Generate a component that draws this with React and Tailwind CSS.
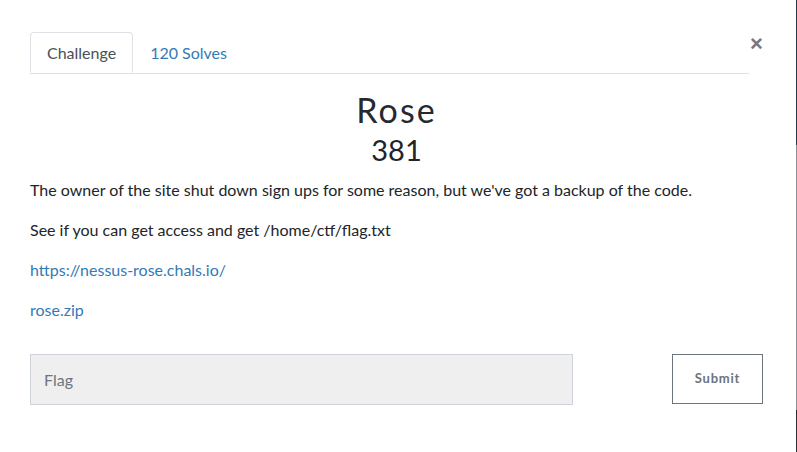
import React, { useState } from 'react';

const App = () => {
    const [flag, setFlag] = useState("")

    return (
        <div className="flex w-full h-[452px] bg-white font-['Lato','Noto_Sans',sans-serif] text-[#212529]">
            <div className="flex-1 pl-[30px] pr-[33px] pt-[32px]">
                <div className="flex items-start">
                    <ul className="flex flex-1 border-b border-[#dee2e6]">
                        <li className="-mb-px h-[41px] px-[16px] flex items-center border border-[#dee2e6] border-b-white rounded-t-[4px] bg-white text-[16px] text-[#495057]">Challenge</li>
                        <li className="h-[41px] px-[17px] flex items-center text-[16px] text-[#337ab7]">120 Solves</li>
                    </ul>
                    <button className="w-[13px] ml-[1px] mt-[2px] text-[22px] leading-[20px] font-bold text-[#777] font-['Liberation_Sans',sans-serif]">×</button>
                </div>
                <div className="text-center mt-[16px]">
                    <h2 className="text-[34px] leading-[40px] font-normal tracking-[0.06em] text-[#262a2e]">Rose</h2>
                    <h3 className="text-[29px] leading-[36px] font-normal mt-[2px]">381</h3>
                </div>
                <div className="mt-[10px] text-[16px] leading-[24px]">
                    <p className="mb-[16px]">The owner of the site shut down sign ups for some reason, but we've got a backup of the code.</p>
                    <p className="mb-[16px]">See if you can get access and get /home/ctf/flag.txt</p>
                    <p className="mb-[16px]"><a href="#" className="text-[#337ab7]">https://nessus-rose.chals.io/</a></p>
                    <p><a href="#" className="text-[#337ab7]">rose.zip</a></p>
                </div>
                <form className="flex justify-between items-start mt-[32px]" onSubmit={e => e.preventDefault()}>
                    <input type="text" value={flag} onChange={e => setFlag(e.target.value)} placeholder="Flag" className="w-[543px] h-[51px] px-[13px] bg-[#efefef] border border-[#ced4da] text-[16px] placeholder:text-[#6c757d] outline-none" />
                    <button type="submit" className="w-[91px] h-[50px] border border-[#6c757d] text-[13px] font-bold tracking-[0.06em] text-[#6c757d]">Submit</button>
                </form>
            </div>
            <div className="w-px flex flex-col">
                <div className="h-[145px] bg-[#1d3c48]"></div>
                <div className="flex-1 bg-[#8a8f93]"></div>
                <div className="h-[42px] bg-[#2a2d30]"></div>
            </div>
        </div>
    )
}

export default App
